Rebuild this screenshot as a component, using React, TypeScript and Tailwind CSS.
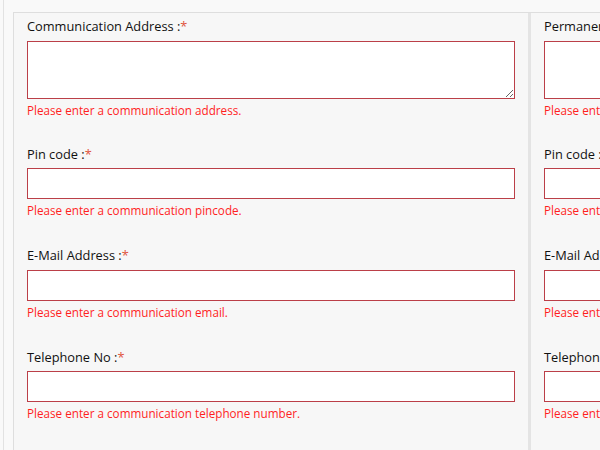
import React from "react";

type Field = { label: string; error: string; area?: boolean };

const left: Field[] = [
  { label: "Communication Address :", error: "Please enter a communication address.", area: true },
  { label: "Pin code :", error: "Please enter a communication pincode." },
  { label: "E-Mail Address :", error: "Please enter a communication email." },
  { label: "Telephone No :", error: "Please enter a communication telephone number." },
];

const right: Field[] = [
  { label: "Permanent Address :", error: "Please enter a permanent address.", area: true },
  { label: "Pin code :", error: "Please enter a permanent pincode." },
  { label: "E-Mail Address :", error: "Please enter a permanent email." },
  { label: "Telephone No :", error: "Please enter a permanent telephone number." },
];

function Column({ fields, divider }: { fields: Field[]; divider?: boolean }) {
  return (
    <div
      className={
        "w-[517px] shrink-0 pl-[13px] pr-[13px] pt-[4px] flex flex-col " +
        (divider ? "border-r-[3px] border-[#e4e4e4]" : "")
      }
    >
      {fields.map((f, i) => (
        <div
          key={i}
          className={"flex flex-col " + (i === 1 ? "mt-[26px]" : i > 1 ? "mt-[27px]" : "")}
        >
          <label className="text-[12.8px] leading-[18px] text-[#111] mb-[5.5px] whitespace-nowrap">
            {f.label}
            <span className="text-[#e0543c]">*</span>
          </label>
          {f.area ? (
            <textarea className="w-[488px] h-[58px] bg-white border border-[#bb3f48] outline-none resize-y block" />
          ) : (
            <input className="w-[488px] h-[31px] bg-white border border-[#bb3f48] outline-none block" />
          )}
          <div className="mt-[3px] text-[11.7px] leading-[17px] text-[#ff1f1f] whitespace-nowrap">
            {f.error}
          </div>
        </div>
      ))}
    </div>
  );
}

export default function App() {
  return (
    <div
      className="w-[600px] h-[450px] overflow-hidden bg-[#f9f9f9] pl-[3px]"
      style={{ fontFamily: '"Open Sans", "Noto Sans", sans-serif' }}
    >
      <div className="h-full border-l border-[#e2e2e2] pl-[9px] pt-[12px]">
        <div className="h-full flex border-t border-l border-[#dedede] bg-[#f7f7f7] overflow-hidden">
          <Column fields={left} divider />
          <Column fields={right} />
        </div>
      </div>
    </div>
  );
}
